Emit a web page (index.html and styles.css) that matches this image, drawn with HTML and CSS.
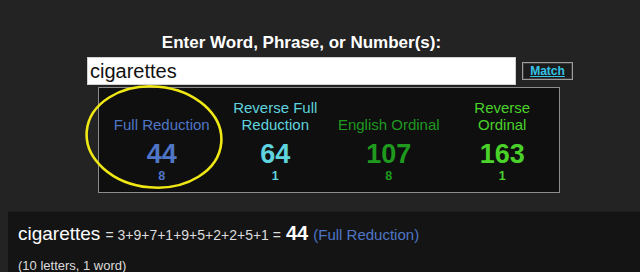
FILE: index.html
```html
<!DOCTYPE html>
<html>
<head>
<meta charset="utf-8">
<link rel="stylesheet" href="styles.css">
</head>
<body>
<div class="top">
  <div class="form">
    <div class="title">Enter Word, Phrase, or Number(s):</div>
    <div class="row">
      <div class="input">cigarettes</div>
      <div class="btn"><span>Match</span></div>
    </div>
  </div>
  <div class="box">
    <div class="col c1">
      <div class="label">Full Reduction</div>
      <div class="num">44</div>
      <div class="sub">8</div>
    </div>
    <div class="col c2">
      <div class="label">Reverse Full<br>Reduction</div>
      <div class="num">64</div>
      <div class="sub">1</div>
    </div>
    <div class="col c3">
      <div class="label">English Ordinal</div>
      <div class="num">107</div>
      <div class="sub">8</div>
    </div>
    <div class="col c4">
      <div class="label">Reverse<br>Ordinal</div>
      <div class="num">163</div>
      <div class="sub">1</div>
    </div>
    <svg class="ring" width="142" height="108" viewBox="0 0 142 108">
      <ellipse cx="70" cy="53" rx="67.5" ry="50.5" transform="rotate(5 70 53)" fill="none" stroke="#f0e814" stroke-width="2.6"/>
    </svg>
  </div>
</div>
<div class="panel">
  <p class="eq"><span class="word">cigarettes</span> <span class="sum">= 3+9+7+1+9+5+2+2+5+1 =</span> <span class="total">44</span> <span class="ciph">(Full Reduction)</span></p>
  <p class="count">(10 letters, 1 word)</p>
</div>
</body>
</html>
```
FILE: styles.css
```css
html, body {
  margin: 0;
  padding: 0;
  background: #232323;
  font-family: "Liberation Sans", Arial, sans-serif;
  height: 272px;
  overflow: hidden;
}

.top {
  padding: 33px 0 0 87px;
  height: 211px;
  box-sizing: border-box;
}

.form {
  width: 486px;
}

.title {
  width: 429px;
  text-align: center;
  color: #fff;
  font-weight: bold;
  font-size: 17px;
  line-height: 20px;
  height: 24px;
}

.row {
  display: flex;
  align-items: center;
  gap: 6px;
  height: 28px;
}

.input {
  width: 429px;
  height: 28px;
  box-sizing: border-box;
  background: #fff;
  border: 1px solid #d0d0d0;
  color: #111;
  font-size: 20px;
  line-height: 26px;
  padding-left: 2px;
}

.btn {
  width: 51px;
  height: 18px;
  box-sizing: border-box;
  border: 1px solid #9c9c9c;
  box-shadow: inset 0 0 0 1px #3a3a3a;
  background: #1c1c1c;
  display: flex;
  align-items: center;
  justify-content: center;
}

.btn span {
  color: #36c3e6;
  font-weight: bold;
  font-size: 12px;
  text-decoration: underline;
}

.box {
  position: relative;
  margin: 2px 0 0 11px;
  width: 462px;
  box-sizing: border-box;
  border: 1px solid #8c8c8c;
  background: #0f0f0f;
  padding: 11px 0 9px 6px;
  display: grid;
  grid-template-columns: repeat(4, 1fr);
}

.col {
  text-align: center;
  display: flex;
  flex-direction: column;
}

.label {
  height: 34px;
  font-size: 15px;
  line-height: 17px;
  display: flex;
  flex-direction: column;
  justify-content: flex-end;
}

.num {
  margin-top: 6px;
  font-size: 27px;
  line-height: 30px;
  font-weight: bold;
}

.sub {
  font-size: 12.5px;
  line-height: 14px;
  font-weight: bold;
}

.c1 { color: #4f76c6; }
.c2 { color: #5fd3de; }
.c3 { color: #1f9a1f; }
.c4 { color: #4ad22b; }

.ring {
  position: absolute;
  left: -15px;
  top: -4px;
}

.panel {
  margin-left: 8px;
  height: 61px;
  background: #141414;
  border-top: 1px solid #1d1d1d;
  box-sizing: border-box;
  padding: 9px 0 0 10px;
  color: #e0e0e0;
}

.panel p {
  margin: 0;
}

.eq {
  font-size: 18px;
  line-height: 24px;
  white-space: nowrap;
}

.word {
  color: #fff;
  font-size: 19px;
}

.sum {
  font-size: 14px;
  color: #dcdcdc;
}

.total {
  font-size: 20px;
  font-weight: bold;
  color: #fff;
}

.ciph {
  font-size: 15px;
  color: #4f76c6;
}

.count {
  margin-top: 11px !important;
  font-size: 13px;
  line-height: 16px;
  color: #dcdcdc;
}
```
